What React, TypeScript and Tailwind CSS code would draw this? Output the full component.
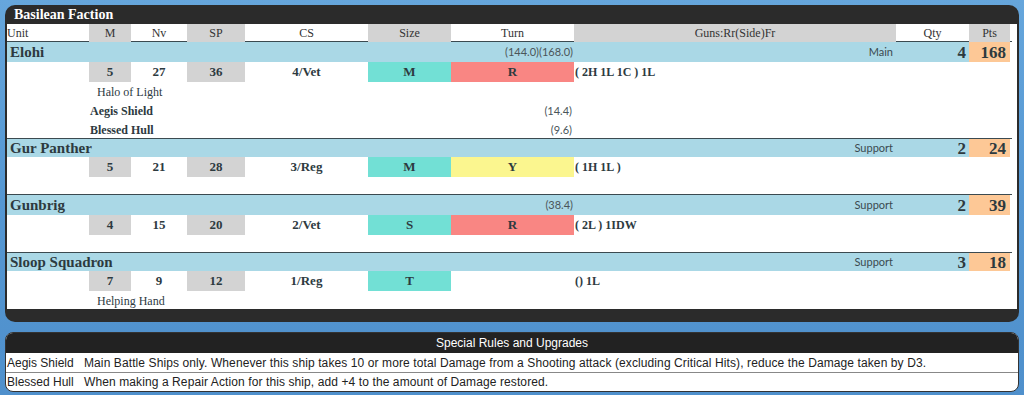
import React from 'react'

type Extra = { label: string; cost?: string; bold?: boolean }

type Unit = {
    name: string
    cost?: string
    role: string
    qty: number
    pts: number
    m: number
    nv: number
    sp: number
    cs: string
    size: string
    turn?: string
    turnBg?: string
    guns: string
    extras: Extra[]
}

const units: Unit[] = [
    {
        name: 'Elohi', cost: '(144.0)(168.0)', role: 'Main', qty: 4, pts: 168,
        m: 5, nv: 27, sp: 36, cs: '4/Vet', size: 'M', turn: 'R', turnBg: 'bg-[#f98683]', guns: '( 2H 1L 1C ) 1L',
        extras: [
            { label: 'Halo of Light' },
            { label: 'Aegis Shield', cost: '(14.4)', bold: true },
            { label: 'Blessed Hull', cost: '(9.6)', bold: true },
        ],
    },
    {
        name: 'Gur Panther', role: 'Support', qty: 2, pts: 24,
        m: 5, nv: 21, sp: 28, cs: '3/Reg', size: 'M', turn: 'Y', turnBg: 'bg-[#fbf68f]', guns: '( 1H 1L )',
        extras: [],
    },
    {
        name: 'Gunbrig', cost: '(38.4)', role: 'Support', qty: 2, pts: 39,
        m: 4, nv: 15, sp: 20, cs: '2/Vet', size: 'S', turn: 'R', turnBg: 'bg-[#f98683]', guns: '( 2L ) 1IDW',
        extras: [],
    },
    {
        name: 'Sloop Squadron', role: 'Support', qty: 3, pts: 18,
        m: 7, nv: 9, sp: 12, cs: '1/Reg', size: 'T', guns: '() 1L',
        extras: [{ label: 'Helping Hand' }],
    },
]

const rules = [
    {
        name: 'Aegis Shield',
        text: 'Main Battle Ships only. Whenever this ship takes 10 or more total Damage from a Shooting attack (excluding Critical Hits), reduce the Damage taken by D3.',
    },
    { name: 'Blessed Hull', text: 'When making a Repair Action for this ship, add +4 to the amount of Damage restored.' },
]

const grid = 'grid w-[1003px] grid-cols-[82px_42px_56px_58px_123px_83px_123px_322px_73px_41px]'
const serif = "font-['Liberation_Serif',serif]"
const sans = "font-['Lato',sans-serif]"

function UnitBlock({ unit }: { unit: Unit }) {
    const head = unit.cost ? 'h-[20px]' : 'h-[18px]'
    return (
        <div className="border-t border-[#3b4a50]">
            <div className={`${grid} ${head} items-center bg-[#aad8e6]`}>
                <div className="col-span-6 pl-[3px] text-[15px] font-bold leading-none text-[#2d3a3f]">{unit.name}</div>
                <div className={`${sans} pr-[1px] text-right text-[11px] text-[#4a5559]`}>{unit.cost}</div>
                <div className={`${sans} pr-[3px] text-right text-[11px] text-[#3a4a50]`}>{unit.role}</div>
                <div className="pr-[3px] text-right text-[17px] font-bold leading-none text-[#2d3a3f]">{unit.qty}</div>
                <div className="flex h-full items-center justify-end bg-[#fdc896] pr-[4px] text-[17px] font-bold leading-none text-[#2d3a3f]">
                    {unit.pts}
                </div>
            </div>
            <div className={`${grid} h-[19px] text-[13px] font-bold text-[#2d3a3f]`}>
                <div />
                <div className="flex items-center justify-center bg-[#d3d3d3]">{unit.m}</div>
                <div className="flex items-center justify-center">{unit.nv}</div>
                <div className="flex items-center justify-center bg-[#d3d3d3]">{unit.sp}</div>
                <div className="flex items-center justify-center">{unit.cs}</div>
                <div className="flex items-center justify-center bg-[#72e0d5]">{unit.size}</div>
                <div className={`flex items-center justify-center ${unit.turnBg ?? ''}`}>{unit.turn}</div>
                <div className="flex items-center pl-[1px] text-[12px]">{unit.guns}</div>
                <div />
                <div />
            </div>
            {unit.extras.length === 0 && <div className="h-[18px]" />}
            {unit.extras.map((x) => (
                <div key={x.label} className={`${grid} h-[19px] items-center pt-[2px] text-[#2d3a3f]`}>
                    <div />
                    <div className={`col-span-5 text-[12px] ${x.bold ? 'pl-[1px] font-bold' : 'pl-[8px]'}`}>{x.label}</div>
                    <div className={`${sans} pr-[2px] text-right text-[11px] text-[#4a5559]`}>{x.cost}</div>
                </div>
            ))}
        </div>
    )
}

export default function App() {
    const heads = ['M', 'Nv', 'SP', 'CS', 'Size', 'Turn', 'Guns:Rr(Side)Fr', 'Qty', 'Pts']
    const shaded = ['M', 'SP', 'Size', 'Guns:Rr(Side)Fr', 'Pts']

    return (
        <div className="h-[395px] overflow-hidden bg-linear-to-b from-[#66a6dc] via-[#5597d2] to-[#4f90cc] pt-[5px]">
            {/* faction list */}
            <div className={`${serif} mx-[5px] rounded-[10px] bg-[#2b2b2b] px-[2px] pb-[13px]`}>
                <div className="flex h-[19px] items-center pl-[7px] text-[14px] font-bold text-white">Basilean Faction</div>
                <div className="bg-white pr-[5px]">
                    <div className={`${grid} h-[18px] items-stretch border-b border-[#3b4a50] text-[12px] text-[#333]`}>
                        <div className="flex items-center">Unit</div>
                        {heads.map((h) => (
                            <div key={h} className={`flex items-center justify-center ${shaded.includes(h) ? 'bg-[#d3d3d3]' : ''}`}>
                                {h}
                            </div>
                        ))}
                    </div>
                    {units.map((u, i) => (
                        <div key={u.name} className={i === 0 ? '-mt-px' : ''}>
                            <UnitBlock unit={u} />
                        </div>
                    ))}
                </div>
            </div>

            {/* special rules */}
            <div className="mx-[5px] mt-[10px] overflow-hidden rounded-[8px] border border-[#333] bg-white font-['Liberation_Sans',Arial,sans-serif] text-[12px] text-[#222]">
                <div className="flex h-[20px] items-center justify-center bg-[#222] text-white">Special Rules and Upgrades</div>
                {rules.map((r, i) => (
                    <div key={r.name} className={`flex h-[19px] items-center ${i > 0 ? 'border-t border-[#888]' : ''}`}>
                        <div className="w-[78px] shrink-0 pl-[1px]">{r.name}</div>
                        <div className="tracking-[0.1px]">{r.text}</div>
                    </div>
                ))}
            </div>
        </div>
    )
}
